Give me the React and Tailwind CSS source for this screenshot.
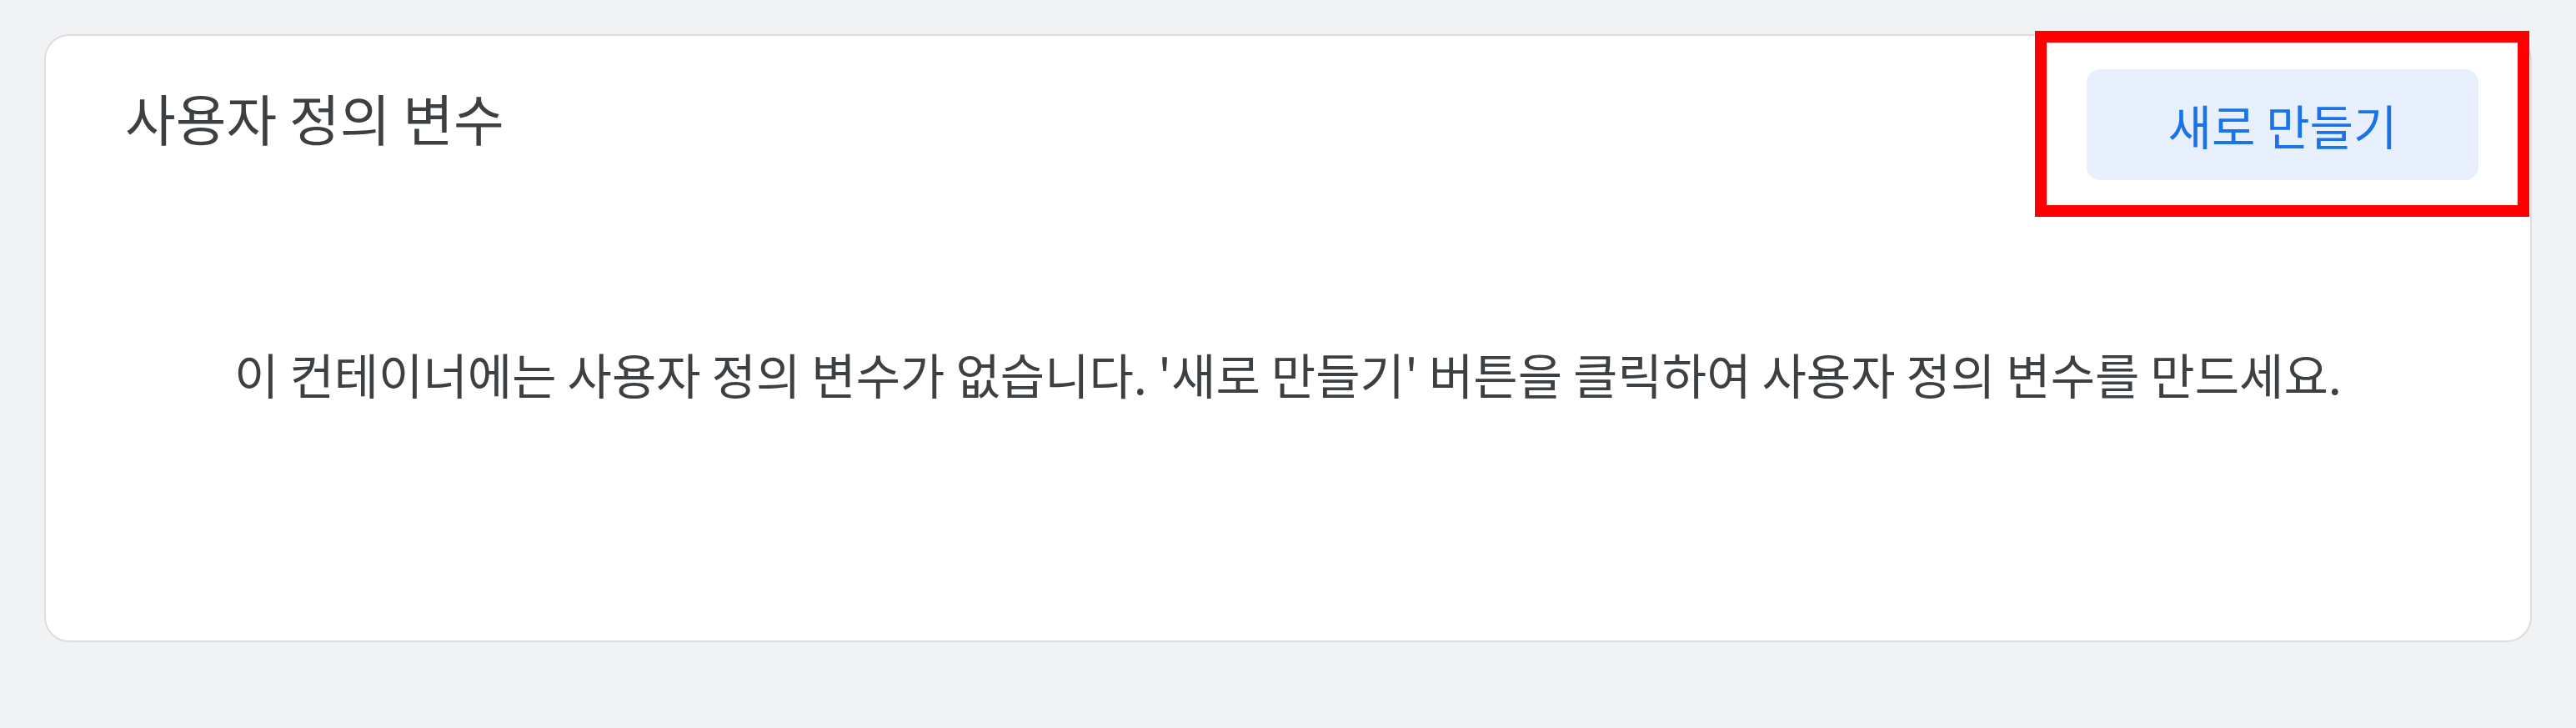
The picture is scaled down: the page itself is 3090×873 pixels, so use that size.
import React from 'react';

const Variables = () => {
  return (
    <div className="relative min-h-screen bg-[#f1f2f4] pt-[41px] pl-[53px] font-['Noto_Sans_CJK_KR',sans-serif]">
      <div className="w-[2984px] h-[729px] bg-white border-2 border-[#dcdde1] rounded-[30px] flex flex-col">
        <div className="flex items-start justify-between pl-[95px] pr-[62px] pt-[40px]">
          <h2 className="mt-[22px] text-[66px] leading-[70px] font-normal text-[#3c4043]">사용자 정의 변수</h2>
          <button className="w-[470px] h-[133px] rounded-[16px] bg-[#e8f0fe] text-[#1a73e8] text-[57px] leading-none">
            새로 만들기
          </button>
        </div>
        <div className="flex justify-center mt-[193px]">
          <p className="text-[58px] leading-[78px] text-[#3c4043]">
            이 컨테이너에는 사용자 정의 변수가 없습니다. '새로 만들기' 버튼을 클릭하여 사용자 정의 변수를 만드세요.
          </p>
        </div>
      </div>
      {/* highlight box */}
      <div className="absolute left-[2441px] top-[37px] w-[593px] h-[223px] border-[14px] border-[#ff0000]"></div>
    </div>
  );
};

export default Variables;
